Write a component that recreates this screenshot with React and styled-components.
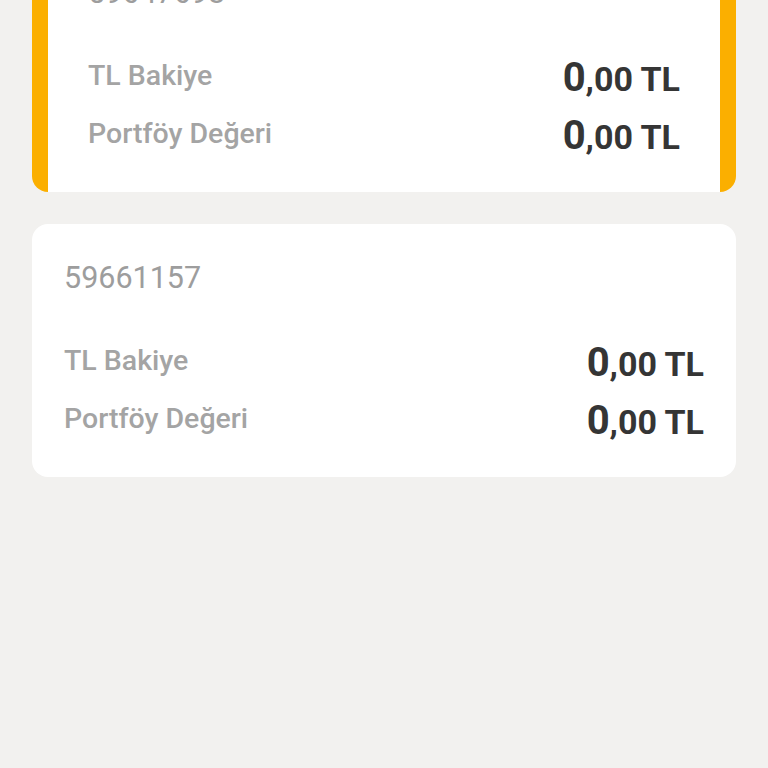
import React from "react";
import styled, { createGlobalStyle } from "styled-components";

const GlobalStyle = createGlobalStyle`
  html, body {
    margin: 0;
    padding: 0;
    background: #f2f1ef;
    font-family: Roboto, "Noto Sans", "Liberation Sans", sans-serif;
  }
`;

const Page = styled.div`
  min-height: 100vh;
  overflow: hidden;
`;

// list is scrolled: first card starts above the viewport
const List = styled.div`
  display: flex;
  flex-direction: column;
  gap: 32px;
  padding: 0 32px;
  margin-top: -61px;
`;

const Card = styled.div`
  background: #ffffff;
  border-radius: 16px;
  padding: ${(p) => (p.$selected ? "36px 40px 32px" : "36px 32px 32px")};
  border-left: ${(p) => (p.$selected ? "16px solid #fbaf00" : "none")};
  border-right: ${(p) => (p.$selected ? "16px solid #fbaf00" : "none")};
`;

const AccountNo = styled.div`
  font-size: 30.5px;
  line-height: 36px;
  color: #9d9d9d;
  margin-bottom: 43px;
`;

const Rows = styled.div`
  display: flex;
  flex-direction: column;
  gap: 10px;
`;

const Row = styled.div`
  display: flex;
  justify-content: space-between;
  align-items: flex-start;
`;

const Label = styled.span`
  font-size: 28.5px;
  font-weight: 500;
  line-height: 44px;
  color: #a4a4a4;
`;

const Value = styled.span`
  font-size: 40px;
  font-weight: 700;
  line-height: 48px;
  color: #353535;
`;

const Decimals = styled.span`
  font-size: 34px;
  line-height: 1;
`;

const Amount = ({ whole, decimals }) => (
  <Value>
    {whole}
    <Decimals>,{decimals} TL</Decimals>
  </Value>
);

const accounts = [
  { no: "59647698", selected: true },
  { no: "59661157", selected: false },
];

export default function App() {
  return (
    <Page>
      <GlobalStyle />
      <List>
        {accounts.map((a) => (
          <Card key={a.no} $selected={a.selected}>
            <AccountNo>{a.no}</AccountNo>
            <Rows>
              <Row>
                <Label>TL Bakiye</Label>
                <Amount whole="0" decimals="00" />
              </Row>
              <Row>
                <Label>Portföy Değeri</Label>
                <Amount whole="0" decimals="00" />
              </Row>
            </Rows>
          </Card>
        ))}
      </List>
    </Page>
  );
}
